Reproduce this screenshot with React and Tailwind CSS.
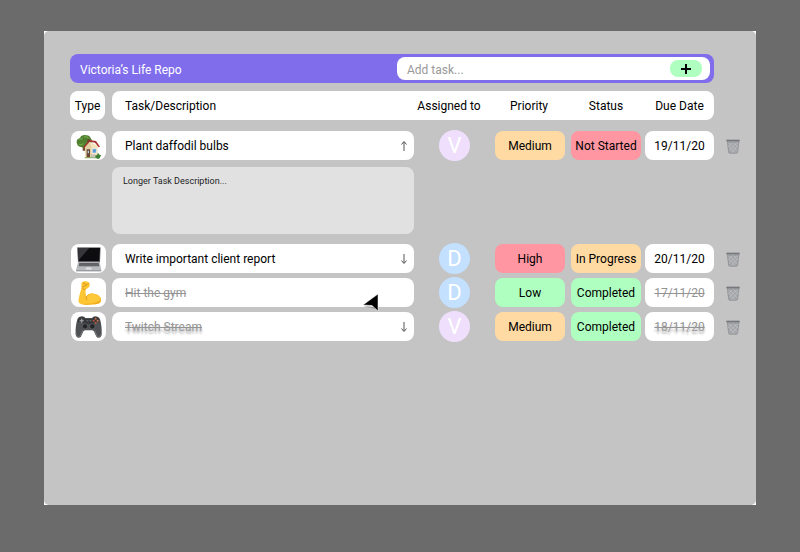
import React from "react";

function HouseIcon() {
  return (
    <svg viewBox="33 18 105 87" className="h-full w-full" aria-hidden="true">
      <path d="M68 55h8v22h-8z" fill="#7a4a2c" />
      <path d="M50 52c-1-8 5-12 10-13 3-8 12-10 18-8 8-1 13 4 14 9 5 4 5 11 1 15-3 4-9 6-13 9-5 4-12 5-16 2-7 1-13-5-14-14z" fill="#4f7f2f" />
      <path d="M56 45c4-6 10-4 12-2M72 37c6-4 12 0 13 4M57 57c5 4 10 2 13-2" fill="none" stroke="#6fa345" strokeWidth="4" />
      <path d="M75 64l14-14 24 12v34l-35 2z" fill="#f4e2bd" />
      <path d="M75 64l13-14 6 14v34H77z" fill="#e3cda3" />
      <path d="M70 66l18-21 20 3 12 17-4 2-11-14-16-3-16 19z" fill="#a8322d" />
      <path d="M82 43h6v8h-6z" fill="#7d3a2c" />
      <path d="M80 73h10v24H80z" fill="#6b4530" />
      <path d="M83 77h4v8h-4z" fill="#a9ccdf" />
      <path d="M97 71h12v13H97z" fill="#5b9bd5" stroke="#fff" strokeWidth="1.5" />
      <path d="M93 88h13v8H93z" fill="#c9c2b8" />
      <path d="M74 97h46v3H74z" fill="#7fa35a" />
      <path d="M114 83l4 6 5 1-3 8-6 4-7-4-2-6 6-2z" fill="#3f7f35" />
    </svg>
  );
}

function LaptopIcon() {
  return (
    <svg viewBox="33 27 105 87" className="h-full w-full" aria-hidden="true">
      <path d="M51 39q0-2 2-2h67q2 0 2 2l-2 44H54z" fill="#77777a" />
      <path d="M54 39h66l-2 40H56z" fill="#0d0d0f" />
      <path d="M54 39h34L57 74z" fill="#37373b" />
      <path d="M54 82h65l5 24q0 3-3 3H51q-3 0-3-3z" fill="#b9babd" />
      <path d="M58 84h58l2 10H56z" fill="#57585c" />
      <path d="M58 87h59M57 91h61" stroke="#929398" strokeWidth="1" />
      <path d="M77 96h18l2 9H75z" fill="#dcdde0" stroke="#98999d" strokeWidth="1" />
      <path d="M48 106h76v3H48z" fill="#929397" />
    </svg>
  );
}

function BicepsIcon() {
  return (
    <svg viewBox="33 129 105 87" className="h-full w-full" aria-hidden="true">
      <path
        d="M65 145c1-4 6-7 11-6 6 0 12 3 13 8 1 5-1 9-4 11-3 3-6 3-8 5-1 7 0 14 2 22 4-6 11-10 20-9 14 1 24 9 24 19 0 9-9 13-21 13-14 2-29 2-39-1-7-2-9-6-7-14 2-15 7-27 9-37-1-4-2-8 0-11z"
        fill="#fcc531"
      />
      <path d="M79 185c4-6 11-10 20-9 14 1 24 9 24 19 0 9-9 13-21 13-14 2-29 2-39-1 20 0 48 0 51-11-4-7-15-13-35-11z" fill="#f3ae20" />
      <path d="M82 183c4-4 10-7 17-7 13 1 22 7 23 16-3 9-21 12-38 8-5-2-6-11-2-17z" fill="#fdc93a" />
      <path d="M66 155c4 1 8 0 10-3M76 151c4-1 6-2 9-5M77 148c-1-3-4-4-7-3M76 163c-3 1-6 0-8-2M79 184c-1 4 0 7 2 10" fill="none" stroke="#c57e16" strokeWidth="1.8" strokeLinecap="round" />
    </svg>
  );
}

function GamepadIcon() {
  return (
    <svg viewBox="33 231 105 87" className="h-full w-full" aria-hidden="true">
      <path
        d="M52 253c3-7 8-9 14-9 6 0 8 3 10 5h20c2-2 4-5 10-5 6 0 11 2 14 9 4 13 6 30 5 43 0 8-4 12-9 12-6 0-8-5-11-12-3-7-5-10-9-10H76c-4 0-6 3-9 10-3 7-5 12-11 12-5 0-9-4-9-12-1-13 1-30 5-43z"
        fill="#505154"
      />
      <path d="M55 251c4-6 17-7 20 0h22c4-7 17-6 20 0l2 12c-6-4-14-4-18 5H71c-4-9-12-9-18-5z" fill="#37383b" />
      <path d="M48 294c1 12 9 16 14 6l7-14M124 294c-1 12-9 16-14 6l-7-14" fill="none" stroke="#77787b" strokeWidth="3" />
      <path d="M65 251v12M59 257h12" stroke="#9b9ca0" strokeWidth="4" />
      <circle cx="107" cy="251" r="3" fill="#d06a43" />
      <circle cx="101" cy="257" r="3" fill="#b7563a" />
      <circle cx="113" cy="257" r="3" fill="#d9784e" />
      <circle cx="107" cy="263" r="3" fill="#b7563a" />
      <circle cx="75" cy="274" r="8" fill="#242527" stroke="#78797c" strokeWidth="1.5" />
      <circle cx="97" cy="274" r="8" fill="#242527" stroke="#78797c" strokeWidth="1.5" />
      <path d="M80 257h5M89 257h5" stroke="#8f9094" strokeWidth="2" />
    </svg>
  );
}

function TrashIcon() {
  return (
    <svg viewBox="0 0 42 45" className="h-[15px] w-[14px]" aria-hidden="true">
      <path d="M3 4h36l-4 36q-1 3-5 3H12q-4 0-5-3z" fill="#a3a5a9" />
      <path d="M8 10l26 26M7 20l20 21M18 6l18 18M34 10L8 36M36 20L16 41M24 6L6 24M28 6l8 8M14 6L6 14" stroke="#c6c8cc" strokeWidth="1.8" />
      <path d="M4 6l4 34q1 3 4 3h18q4 0 5-3l4-34" fill="none" stroke="#8b8d91" strokeWidth="2" />
      <path d="M1 2h40v5H1z" fill="#77787c" />
      <path d="M5 9h32" stroke="#8f9195" strokeWidth="3" />
    </svg>
  );
}

function ArrowIcon({ up }) {
  return (
    <svg viewBox="0 0 8 12" className={up ? "h-3 w-2" : "h-3 w-2 rotate-180"} fill="none" stroke="#555" strokeWidth="1" aria-hidden="true">
      <path d="M4 11V2M1.500 4.500L4 1.500l2.500 3" />
    </svg>
  );
}

const ROW = "grid grid-cols-[41px_minmax(0,1fr)_81px_76px_74px_69px_26px]";

const COLORS = {
  Medium: "bg-[#ffdaa3]",
  "In Progress": "bg-[#ffdaa3]",
  High: "bg-[#ff96a2]",
  "Not Started": "bg-[#ff96a2]",
  Low: "bg-[#afffc0]",
  Completed: "bg-[#afffc0]",
};

const TASKS = [
  { Icon: HouseIcon, type: "Home", name: "Plant daffodil bulbs", who: "V", priority: "Medium", status: "Not Started", due: "19/11/20", open: true },
  { Icon: LaptopIcon, type: "Work", name: "Write important client report", who: "D", priority: "High", status: "In Progress", due: "20/11/20" },
  { Icon: BicepsIcon, type: "Fitness", name: "Hit the gym", who: "D", priority: "Low", status: "Completed", due: "17/11/20", done: true, hovered: true },
  { Icon: GamepadIcon, type: "Gaming", name: "Twitch Stream", who: "V", priority: "Medium", status: "Completed", due: "18/11/20", done: true, ghost: true },
];

function Pill({ children }) {
  return (
    <div className={`flex h-full items-center justify-center rounded-lg pt-px whitespace-nowrap ${COLORS[children]}`}>
      {children}
    </div>
  );
}

function TaskRow({ task }) {
  const { Icon } = task;
  const tone = task.done ? "text-[#949494] line-through" : "";
  const ghost = task.ghost ? "[text-shadow:0_3px_2px_#bbbbbb]" : "";
  return (
    <>
      <tr className={`${ROW} h-[29px]`}>
        <td className="pr-1.5">
          <div role="img" aria-label={task.type} className="h-[29px] overflow-hidden rounded-lg bg-white">
            <Icon />
          </div>
        </td>
        <td className="relative flex items-center justify-between rounded-lg bg-white pt-px pr-1 pl-[13px]">
          <span className={`${tone} ${ghost}`}>{task.name}</span>
          {!task.hovered && (
            <button type="button" aria-label={task.open ? "Hide description" : "Show description"} className="p-0.5">
              <ArrowIcon up={task.open} />
            </button>
          )}
          {task.hovered && (
            <svg viewBox="0 0 17 19" className="absolute top-[15px] right-[35px] h-[19px] w-[17px]" aria-hidden="true">
              <path d="M1 13l12 1v2z" fill="#9a9a9a" />
              <path d="M16 1v17l-6-5.500L1 12z" fill="#000" stroke="#fff" strokeWidth="0.500" />
            </svg>
          )}
        </td>
        <td className="flex h-[29px] items-center justify-center">
          <span
            className={`flex size-[31px] shrink-0 items-center justify-center rounded-full text-[22px] leading-none text-white ${
              task.who === "V" ? "bg-[#efdffc]" : "bg-[#c3e0ff]"
            }`}
          >
            {task.who}
          </span>
        </td>
        <td className="pr-1.5">
          <Pill>{task.priority}</Pill>
        </td>
        <td className="pr-1">
          <Pill>{task.status}</Pill>
        </td>
        <td className={`flex items-center justify-center rounded-lg bg-white pt-px ${tone} ${ghost}`}>{task.due}</td>
        <td className="flex items-center justify-end pt-0.5">
          <button type="button" aria-label={`Delete ${task.name}`}>
            <TrashIcon />
          </button>
        </td>
      </tr>
      {task.open && (
        <tr className={`${ROW} mt-0.5 mb-[5px]`}>
          <td className="col-start-2">
            <textarea
              aria-label="Task description"
              placeholder="Longer Task Description..."
              className="block h-[67px] w-full resize-none rounded-lg bg-[#e1e1e1] px-[11px] py-2 text-[9px] leading-3 outline-none placeholder:text-[#222]"
            />
          </td>
        </tr>
      )}
    </>
  );
}

export default function App() {
  return (
    <main className="flex min-h-screen flex-col bg-[#6b6b6b] px-11 pt-[31px] pb-[47px] font-[Roboto,sans-serif] text-[12px] leading-4 text-black">
      <div className="flex flex-1 flex-col bg-white">
        <section className="flex-1 rounded-[5px] bg-[#c4c4c4] pt-[23px] pr-4 pb-6 pl-[27px]">
          <header className="mr-[26px] -ml-px flex h-[29px] items-center justify-between rounded-lg bg-[#7f6dec] pr-1 pl-2.5">
            <h1 className="pt-0.5 text-white">Victoria’s Life Repo</h1>
            <form className="flex h-[23px] w-[313px] items-center rounded-lg bg-white pr-2 pl-2.5" onSubmit={(e) => e.preventDefault()}>
              <input
                aria-label="Add task"
                placeholder="Add task..."
                className="min-w-0 flex-1 bg-transparent pt-0.5 outline-none placeholder:text-[#999]"
              />
              <button type="submit" aria-label="Add" className="flex h-[17px] w-8 items-center justify-center rounded-lg bg-[#afffc0]">
                <svg viewBox="0 0 10 10" className="size-2.5" stroke="#000" strokeWidth="2" aria-hidden="true">
                  <path d="M5 0v10M0 5h10" />
                </svg>
              </button>
            </form>
          </header>

          <table className="mt-2 block">
            <thead className="block">
              <tr className={`${ROW} h-[29px] *:flex *:items-center *:justify-center *:pt-px *:font-normal`}>
                <th scope="col" className="mr-[7px] -ml-px rounded-lg bg-white">Type</th>
                <th scope="col" className="rounded-l-lg bg-white pl-[13px] !justify-start">Task/Description</th>
                <th scope="col" className="bg-white pr-[11px] whitespace-nowrap">Assigned to</th>
                <th scope="col" className="bg-white pr-2">Priority</th>
                <th scope="col" className="bg-white pr-1">Status</th>
                <th scope="col" className="rounded-r-lg bg-white">Due Date</th>
              </tr>
            </thead>
            <tbody className="mt-[11px] flex flex-col gap-[5px]">
              {TASKS.map((task) => (
                <TaskRow key={task.name} task={task} />
              ))}
            </tbody>
          </table>
        </section>
      </div>
    </main>
  );
}
